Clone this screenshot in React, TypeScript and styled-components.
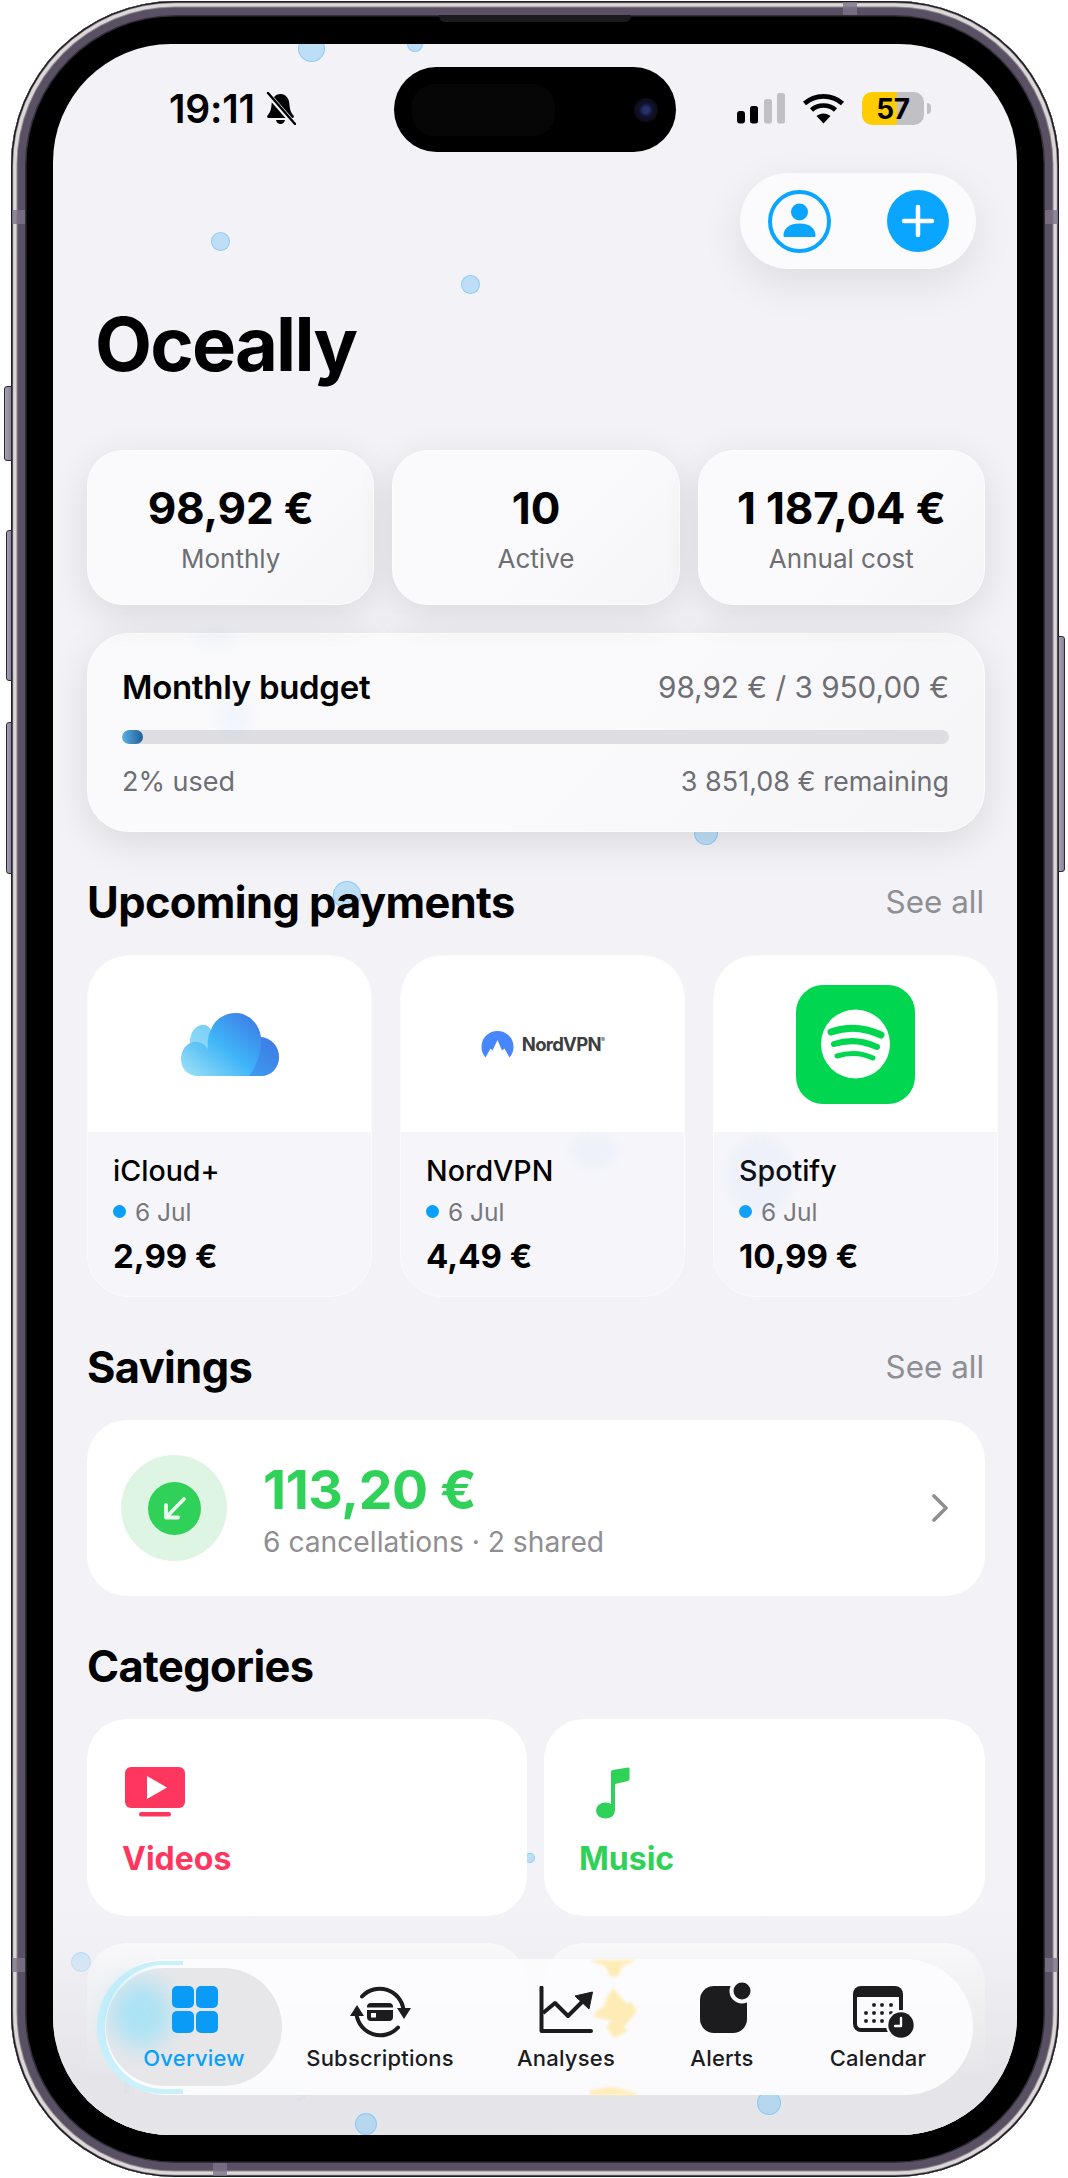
import React from "react";
import styled, { createGlobalStyle } from "styled-components";

const Global = createGlobalStyle`
  html, body { margin: 0; padding: 0; background: #fff; }
  body { font-family: Inter, "Liberation Sans", sans-serif; -webkit-font-smoothing: antialiased; }
  * { box-sizing: border-box; }
`;

const Page = styled.div`
  width: 1068px;
  height: 2178px;
  padding: 1px 9px 1px 11px;
  position: relative;
  overflow: hidden;
`;

const Shell = styled.div`
  position: relative;
  width: 1048px;
  height: 2176px;
  padding: 43px 42px 42px;
  border-radius: 164px;
  background: #000;
  box-shadow:
    inset 0 0 0 1.5px #1f1a24,
    inset 0 0 0 2.2px #8b8690,
    inset 0 0 0 5.5px #dcd8d6,
    inset 0 0 0 6.5px #8e8790,
    inset 0 0 0 14px #5a5064,
    inset 0 0 0 15.5px #332d38;
`;

const SideKey = styled.div<{ $side: "left" | "right"; $top: number; $height: number; $w: number }>`
  position: absolute;
  top: ${(p) => p.$top}px;
  height: ${(p) => p.$height}px;
  width: ${(p) => p.$w}px;
  ${(p) => (p.$side === "left" ? `left: ${-p.$w + 1}px; border-radius: 3px 0 0 3px;` : `right: ${-p.$w + 1}px; border-radius: 0 3px 3px 0;`)}
  background: linear-gradient(90deg, #a8a0b4, #8a8296);
  border: 1.5px solid #2c2732;
`;

const Notch = styled.div<{ $x?: number; $y?: number; $r?: number; $b?: number; $vertical?: boolean }>`
  position: absolute;
  background: #7d7388;
  ${(p) => (p.$x !== undefined ? `left: ${p.$x}px;` : "")}
  ${(p) => (p.$r !== undefined ? `right: ${p.$r}px;` : "")}
  ${(p) => (p.$y !== undefined ? `top: ${p.$y}px;` : "")}
  ${(p) => (p.$b !== undefined ? `bottom: ${p.$b}px;` : "")}
  width: ${(p) => (p.$vertical ? 13 : 14)}px;
  height: ${(p) => (p.$vertical ? 14 : 13)}px;
  opacity: 0.8;
`;

const Speaker = styled.div`
  position: absolute;
  top: 14px;
  left: 428px;
  width: 192px;
  height: 7px;
  border-radius: 0 0 6px 6px;
  background: #1b1b1f;
`;

const Screen = styled.div`
  position: relative;
  width: 964px;
  height: 2091px;
  border-radius: 118px;
  overflow: hidden;
  background: #f2f2f7;
`;

const Flow = styled.div`
  position: relative;
  z-index: 1;
  padding: 0 32px 0 34px;
`;

const Bubble = styled.span<{ $x: number; $y: number; $d: number; $front?: boolean }>`
  position: absolute;
  left: ${(p) => p.$x - p.$d / 2}px;
  top: ${(p) => p.$y - p.$d / 2}px;
  width: ${(p) => p.$d}px;
  height: ${(p) => p.$d}px;
  border-radius: 50%;
  background: rgba(120, 195, 245, 0.42);
  border: 1.5px solid rgba(110, 195, 250, 0.65);
  z-index: ${(p) => (p.$front ? 3 : 0)};
`;

const FaintSpot = styled.span<{ $x: number; $y: number; $w: number; $h: number }>`
  position: absolute;
  left: ${(p) => p.$x}px;
  top: ${(p) => p.$y}px;
  width: ${(p) => p.$w}px;
  height: ${(p) => p.$h}px;
  border-radius: 50%;
  background: rgba(170, 205, 250, 0.09);
  filter: blur(7px);
  z-index: 2;
`;

const Island = styled.div`
  position: absolute;
  z-index: 5;
  top: 23px;
  left: 341px;
  width: 282px;
  height: 85px;
  border-radius: 43px;
  background: #000;
  display: flex;
  align-items: center;
  justify-content: space-between;
  padding: 0 18px;
`;

const IslandSensor = styled.div`
  width: 143px;
  height: 52px;
  border-radius: 22px;
  background: #060606;
`;

const IslandLens = styled.div`
  width: 24px;
  height: 24px;
  border-radius: 50%;
  background: radial-gradient(circle, #26306a 0 18%, #10122c 40%, #0a0a14 75%);
`;

const StatusBar = styled.div`
  height: 129px;
  display: flex;
  align-items: center;
  justify-content: space-between;
  margin-right: 61px;
  margin-left: 82px;
`;

const StatusLeft = styled.div`
  display: flex;
  align-items: center;
  gap: 10px;
`;

const Clock = styled.span`
  font-size: 39px;
  font-weight: 600;
  letter-spacing: -0.2px;
  color: #000;
`;

const StatusRight = styled.div`
  display: flex;
  align-items: center;
  gap: 17px;
`;

const Battery = styled.div`
  position: relative;
  width: 62px;
  height: 33px;
  border-radius: 10px;
  background: linear-gradient(90deg, #ffcc00 0 57%, #c0c0c5 57% 100%);
  display: flex;
  align-items: center;
  justify-content: center;
  font-size: 28px;
  font-weight: 700;
  color: #000;
  letter-spacing: -0.4px;
  &::after {
    content: "";
    position: absolute;
    left: 65px;
    top: 11px;
    width: 4px;
    height: 11px;
    border-radius: 0 4px 4px 0;
    background: #c0c0c5;
  }
`;

const ActionRow = styled.div`
  display: flex;
  justify-content: flex-end;
  padding-right: 9px;
`;

const ActionPill = styled.div`
  width: 236px;
  height: 96px;
  border-radius: 48px;
  background: #fbfbfe;
  box-shadow: 0 14px 44px rgba(0, 0, 0, 0.09);
  display: flex;
  align-items: center;
  justify-content: space-between;
  padding: 0 27px 0 28px;
`;

const Title = styled.h1`
  margin: 35px 0 66px 8px;
  font-size: 74px;
  line-height: 80px;
  font-weight: 700;
  letter-spacing: -1.8px;
  color: #000;
`;

const StatGrid = styled.div`
  display: grid;
  grid-template-columns: repeat(3, 1fr);
  gap: 18px;
`;

const glass = `
  background: linear-gradient(135deg, #fafafc 55%, #f5f5f8 100%);
  border: 1.5px solid #fdfdfe;
  box-shadow: 0 10px 38px rgba(0, 0, 0, 0.105);
`;

const StatCard = styled.div`
  ${glass}
  height: 155px;
  border-radius: 36px;
  display: flex;
  flex-direction: column;
  align-items: center;
  padding-top: 32px;
`;

const StatValue = styled.div`
  font-size: 44px;
  line-height: 50px;
  font-weight: 700;
  letter-spacing: -0.2px;
  color: #000;
`;

const StatLabel = styled.div`
  margin-top: 11px;
  font-size: 26px;
  line-height: 30px;
  color: #6e6e73;
`;

const BudgetCard = styled.div`
  ${glass}
  margin-top: 28px;
  height: 199px;
  border-radius: 42px;
  padding: 33px 35px 0 34px;
`;

const BudgetRow = styled.div<{ $small?: boolean }>`
  display: flex;
  justify-content: space-between;
  align-items: center;
  height: 40px;
  color: #6e6e73;
  font-size: ${(p) => (p.$small ? 27 : 29.7)}px;
`;

const BudgetTitle = styled.span`
  font-size: 33px;
  font-weight: 600;
  letter-spacing: -0.3px;
  color: #000;
`;

const BudgetTrack = styled.div`
  margin: 23px 0 17px;
  height: 14px;
  border-radius: 7px;
  background: #dedee2;
  overflow: hidden;
`;

const BudgetFill = styled.div`
  height: 100%;
  border-radius: 7px;
  background: linear-gradient(90deg, #5cb0e4, #1f5f96);
`;

const SectionHead = styled.div`
  margin: 45px 0 28px;
  height: 50px;
  display: flex;
  align-items: center;
  justify-content: space-between;
`;

const SectionTitle = styled.h2`
  margin: 0;
  font-size: 43.4px;
  font-weight: 700;
  letter-spacing: -0.6px;
  color: #000;
`;

const SeeAll = styled.span`
  font-size: 31.4px;
  color: #8e8e93;
  padding-right: 1px;
`;

const UpcomingRow = styled.div`
  display: flex;
  gap: 28px;
  width: 911px;
`;

const UpcomingCard = styled.div`
  flex: 0 0 285px;
  height: 342px;
  border-radius: 42px;
  overflow: hidden;
  background: #f6f6fa;
  border: 1.5px solid #fbfbfd;
  display: flex;
  flex-direction: column;
`;

const LogoArea = styled.div`
  height: 176px;
  background: #fff;
  display: flex;
  align-items: center;
  justify-content: center;
`;

const NordLogo = styled.div`
  display: flex;
  align-items: center;
  gap: 8px;
`;

const NordWord = styled.span`
  font-size: 18.5px;
  font-weight: 700;
  letter-spacing: -0.7px;
  color: #3d3e42;
  sup { font-size: 6px; font-weight: 500; vertical-align: 9px; line-height: 0; }
`;

const UpcomingBody = styled.div`
  padding: 18px 25px 0;
`;

const UpcomingName = styled.div`
  font-size: 28.6px;
  line-height: 41px;
  font-weight: 500;
  color: #000;
`;

const UpcomingDate = styled.div`
  display: flex;
  align-items: center;
  gap: 9px;
  height: 41px;
  font-size: 24.5px;
  color: #77777c;
`;

const Dot = styled.span`
  width: 13px;
  height: 13px;
  border-radius: 50%;
  background: #0a9ff8;
`;

const UpcomingPrice = styled.div`
  margin-top: 2px;
  font-size: 33px;
  line-height: 44px;
  font-weight: 700;
  color: #000;
`;

const SavingsCard = styled.div`
  height: 176px;
  border-radius: 40px;
  background: #fff;
  display: flex;
  align-items: center;
  padding: 0 36px 0 34px;
`;

const SavingsHalo = styled.div`
  width: 106px;
  height: 106px;
  border-radius: 50%;
  background: #def5e4;
  display: flex;
  align-items: center;
  justify-content: center;
  flex: none;
`;

const SavingsText = styled.div`
  margin-left: 36px;
  padding-top: 4px;
  flex: 1;
`;

const SavingsAmount = styled.div`
  font-size: 53.5px;
  line-height: 60px;
  font-weight: 700;
  color: #30d158;
  letter-spacing: -0.4px;
`;

const SavingsSub = styled.div`
  margin-top: 4px;
  font-size: 28.2px;
  line-height: 36px;
  color: #8e8e93;
`;

const CategoryGrid = styled.div`
  display: grid;
  grid-template-columns: 440px 441px;
  gap: 27px 17px;
`;

const CategoryCard = styled.div`
  height: 197px;
  border-radius: 40px;
  background: #fff;
  padding: 47px 35px 0;
`;

const CategoryIcon = styled.div<{ $indent?: number }>`
  height: 58px;
  display: flex;
  align-items: flex-start;
  padding: 1px 0 0 ${(p) => p.$indent ?? 0}px;
`;

const CategoryName = styled.div<{ $color: string }>`
  margin-top: 15px;
  font-size: 32px;
  line-height: 40px;
  font-weight: 700;
  color: ${(p) => p.$color};
`;

const BottomFade = styled.div`
  position: absolute;
  z-index: 2;
  left: 0;
  right: 0;
  bottom: 0;
  height: 225px;
  background: linear-gradient(180deg, rgba(236, 236, 240, 0) 0%, rgba(236, 236, 240, 0.55) 25%, rgba(228, 228, 232, 0.96) 75%, rgba(229, 229, 233, 0.98) 100%);
`;

const TabBar = styled.nav`
  position: absolute;
  z-index: 4;
  left: 45px;
  top: 1915px;
  width: 875px;
  height: 136px;
  border-radius: 68px;
  background: rgba(252, 252, 254, 0.94);
  display: grid;
  grid-template-columns: 176px 196px 176px 136px 176px;
  align-items: stretch;
  padding: 9px 7px 9px 8px;
`;

const Tab = styled.div<{ $active?: boolean }>`
  position: relative;
  display: flex;
  flex-direction: column;
  align-items: center;
  padding-top: 18px;
  border-radius: 59px;
  background: ${(p) => (p.$active ? "#e7e7ea" : "transparent")};
`;

const TabIcon = styled.div<{ $nudgeX?: number; $raise?: number }>`
  position: relative;
  z-index: 1;
  height: 53px;
  display: flex;
  align-items: flex-start;
  justify-content: center;
  margin-left: ${(p) => p.$nudgeX ?? 0}px;
  top: ${(p) => -(p.$raise ?? 0)}px;
`;

const TabLabel = styled.span<{ $active?: boolean }>`
  position: relative;
  z-index: 1;
  margin-top: 4px;
  font-size: 22px;
  line-height: 30px;
  font-weight: 500;
  letter-spacing: 0.2px;
  color: ${(p) => (p.$active ? "#0a9ff8" : "#1c1c1e")};
`;

const GridGlyph = styled.div`
  display: grid;
  grid-template-columns: 22px 22px;
  grid-auto-rows: 22px;
  gap: 3px 2px;
  span { border-radius: 5px; background: #0a9bf6; }
`;

const LensArc = styled.div`
  position: absolute;
  left: -1px;
  top: 2px;
  width: 86px;
  height: 133px;
  border-radius: 66px 0 0 66px;
  border-style: solid;
  border-color: #c9f0fb;
  border-width: 4px 0 5px 8px;
`;

const LensGlow = styled.div`
  position: absolute;
  left: 4px;
  top: 12px;
  width: 62px;
  height: 68px;
  border-radius: 50%;
  background: #a5e2f6;
  filter: blur(11px);
  opacity: 0.9;
`;

const FishShape = styled.svg`
  position: absolute;
  left: 492px;
  top: 0;
  filter: blur(1.5px);
  opacity: 0.82;
`;

const Person = () => (
  <svg width="63" height="63" viewBox="0 0 63 63">
    <circle cx="31.5" cy="31.5" r="29.5" fill="none" stroke="#0aa5ff" strokeWidth="4" />
    <circle cx="31.5" cy="22" r="8.5" fill="#0aa5ff" />
    <path d="M15.5 45.5C15.5 38 22 33.5 31.5 33.5S47.5 38 47.5 45.5C47.5 46.5 47 47 46 47H17C16 47 15.5 46.5 15.5 45.5Z" fill="#0aa5ff" />
  </svg>
);

const PlusBadge = () => (
  <svg width="62" height="62" viewBox="0 0 62 62">
    <circle cx="31" cy="31" r="31" fill="#0aa5ff" />
    <path d="M17 31H45M31 17V45" stroke="#fff" strokeWidth="4.5" strokeLinecap="round" />
  </svg>
);

const BellSlash = () => (
  <svg width="31" height="33" viewBox="0 0 31 33">
    <path d="M15.5 2C10 2 7 6.5 6.6 12C6.2 18 5 20.5 2.5 23.5C1.7 24.6 2.3 26 3.7 26H27.3C28.7 26 29.3 24.6 28.5 23.5C26 20.5 24.8 18 24.4 12C24 6.5 21 2 15.5 2Z" fill="#000" />
    <path d="M11 28H20C19.5 30.5 17.7 32 15.5 32S11.5 30.5 11 28Z" fill="#000" />
    <path d="M2 1L29 32" stroke="#f2f2f7" strokeWidth="5" />
    <path d="M3 1L30 32" stroke="#000" strokeWidth="2.4" strokeLinecap="round" />
  </svg>
);

const Signal = () => (
  <svg width="48" height="31" viewBox="0 0 48 31">
    <rect x="0" y="18" width="8" height="12.5" rx="3" fill="#000" />
    <rect x="13" y="13" width="8" height="17.5" rx="2.5" fill="#000" />
    <rect x="27" y="6" width="8" height="24.5" rx="2.5" fill="#c0c0c5" />
    <rect x="40" y="0" width="8" height="30.5" rx="2.5" fill="#c0c0c5" />
  </svg>
);

const Wifi = () => (
  <svg width="43" height="31" viewBox="0 0 43 31">
    <path d="M2.5 10.5C13 1 30 1 40.5 10.5" fill="none" stroke="#000" strokeWidth="4.6" />
    <path d="M9.5 17C16 11 27 11 33.5 17" fill="none" stroke="#000" strokeWidth="4.6" />
    <path d="M14.5 23C18.5 19.5 24.5 19.5 28.5 23L21.5 30.5Z" fill="#000" />
  </svg>
);

const ICloud = () => (
  <svg width="98" height="63" viewBox="0 0 98 63">
    <defs>
      <linearGradient id="cloudFill" x1="0" y1="1" x2="1" y2="0.25">
        <stop offset="0" stopColor="#a3e3f5" />
        <stop offset="0.5" stopColor="#3fb5f8" />
        <stop offset="1" stopColor="#3d74e4" />
      </linearGradient>
    </defs>
    <path d="M17 63C6 63 0 55 0 46C0 39 3.500 33 9 30C9 20 14 12 22 12C26 12 28.500 14 30 17C33 7 43 0 55 0C67 0 78 10 80 24C91 25 98 34 98 44C98 55 90 63 80 63Z" fill="url(#cloudFill)" />
    <path d="M30 17C27 22 26 30 27 36C22 29 15 27 9 30C9 20 14 12 22 12C26 12 28.500 14 30 17Z" fill="#bdeef8" opacity="0.5" />
    <path d="M80 24C81 34 78 50 68 63H80C90 63 98 55 98 44C98 34 91 25 80 24Z" fill="#3d6fe0" opacity="0.4" />
  </svg>
);

const NordMark = () => (
  <svg width="33" height="28" viewBox="0 0 33 28">
    <path d="M4.500 27.500A16 16 0 1 1 28.500 27.500L23.500 18.500L21 20.500L16.500 10L11.500 20.500L9.500 18.500Z" fill="#4687ff" />
  </svg>
);

const SpotifyTile = () => (
  <svg width="119" height="119" viewBox="0 0 119 119">
    <rect width="119" height="119" rx="27" fill="#00d64f" />
    <circle cx="59.500" cy="59" r="34.500" fill="#fff" />
    <g fill="none" stroke="#00d64f" strokeLinecap="round">
      <path d="M35 47Q60 38 85 50" strokeWidth="7" />
      <path d="M38 59Q60 52 81 62" strokeWidth="6" />
      <path d="M41 71Q60 65 77 73" strokeWidth="5" />
    </g>
  </svg>
);

const DownLeft = () => (
  <svg width="53" height="53" viewBox="0 0 53 53">
    <circle cx="26.500" cy="26.500" r="26.500" fill="#30d158" />
    <path d="M36 17L19 34.500M18 23V35.500H30" fill="none" stroke="#e9fbee" strokeWidth="3.800" strokeLinecap="round" strokeLinejoin="round" />
  </svg>
);

const Chevron = () => (
  <svg width="18" height="28" viewBox="0 0 18 28">
    <path d="M3 2L15 14L3 26" fill="none" stroke="#8e8e93" strokeWidth="3.600" strokeLinecap="round" strokeLinejoin="round" />
  </svg>
);

const Tv = () => (
  <svg width="60" height="50" viewBox="0 0 60 50">
    <rect width="60" height="41" rx="6" fill="#ff375f" />
    <path d="M22 9L42 20.500L22 32Z" fill="#fff" />
    <rect x="14" y="45" width="32" height="4.500" rx="2.200" fill="#ff375f" />
  </svg>
);

const Note = () => (
  <svg width="34" height="52" viewBox="0 0 34 52">
    <ellipse cx="9.500" cy="43.500" rx="9.500" ry="8" fill="#30d158" />
    <rect x="15" y="5" width="4" height="39" fill="#30d158" />
    <path d="M15 5C15 4 15.500 3.500 16.500 3L32 0.500C33 0.500 33.500 1 33.500 2V12C33.500 13 33 13.500 32 14L15 18Z" fill="#30d158" />
  </svg>
);

const SubscriptionGlyph = () => (
  <svg width="61" height="52" viewBox="0 0 61 52">
    <g fill="none" stroke="#1c1c1e" strokeWidth="4" strokeLinecap="round">
      <path d="M12 10.500A24 24 0 0 1 53.500 24" />
      <path d="M48 41.500A24 24 0 0 1 6.500 28" />
    </g>
    <path d="M47 22H61L54 33Z" fill="#1c1c1e" />
    <path d="M0 30H14L7 19Z" fill="#1c1c1e" />
    <rect x="17" y="17" width="26" height="18" rx="4" fill="#1c1c1e" />
    <rect x="17" y="21.500" width="26" height="2.500" fill="#fbfbfd" />
    <rect x="21" y="27" width="5" height="4.500" fill="#fbfbfd" />
  </svg>
);

const ChartGlyph = () => (
  <svg width="54" height="47" viewBox="0 0 54 47">
    <path d="M2.500 1.500V45H52" fill="none" stroke="#1c1c1e" strokeWidth="4" strokeLinecap="round" strokeLinejoin="round" />
    <path d="M4 27L16 17L29 30L43 16" fill="none" stroke="#1c1c1e" strokeWidth="4" strokeLinejoin="round" />
    <path d="M36 10L53.500 6L50 23Z" fill="#1c1c1e" stroke="#1c1c1e" strokeWidth="1" strokeLinejoin="round" />
  </svg>
);

const AlertGlyph = () => (
  <svg width="58" height="54" viewBox="0 0 58 54">
    <rect x="0" y="5" width="47" height="47" rx="14" fill="#1c1c1e" />
    <circle cx="42" cy="10" r="12.500" fill="#fbfbfd" />
    <circle cx="42" cy="10" r="8.500" fill="#1c1c1e" />
  </svg>
);

const CalendarGlyph = () => {
  const dots: [number, number][] = [
    [21, 19], [29, 19], [38, 19],
    [13, 27], [21, 27], [29, 27], [38, 27],
    [13, 35], [21, 35], [29, 35],
  ];
  return (
    <svg width="64" height="54" viewBox="0 0 64 54">
      <rect width="50" height="46" rx="8" fill="#1c1c1e" />
      <path d="M4 11H46V38C46 40 44.500 42 42 42H8C5.500 42 4 40 4 38Z" fill="#fbfbfd" />
      {dots.map(([x, y]) => (
        <rect key={`${x}-${y}`} x={x - 1.750} y={y - 1.750} width="3.500" height="3.500" rx="1" fill="#1c1c1e" />
      ))}
      <circle cx="48" cy="39" r="15" fill="#fbfbfd" />
      <circle cx="48" cy="39" r="12.700" fill="#1c1c1e" />
      <path d="M48 32V40H42" fill="none" stroke="#fbfbfd" strokeWidth="2.400" strokeLinecap="round" strokeLinejoin="round" />
    </svg>
  );
};

const bubbles = [
  { x: 258, y: 4, d: 27 },
  { x: 362, y: 0, d: 16 },
  { x: 167, y: 197, d: 19 },
  { x: 417, y: 240, d: 19 },
  { x: 653, y: 789, d: 24 },
  { x: 294, y: 851, d: 28 },
  { x: 477, y: 1814, d: 10 },
  { x: 28, y: 1918, d: 20 },
  { x: 313, y: 2080, d: 22, front: true },
  { x: 716, y: 2059, d: 24, front: true },
];

const spots = [
  { x: 140, y: 588, w: 44, h: 14 },
  { x: 164, y: 650, w: 34, h: 44 },
  { x: 516, y: 1090, w: 50, h: 34 },
  { x: 672, y: 1092, w: 70, h: 80 },
];

const upcoming = [
  { name: "iCloud+", price: "2,99 €", logo: <ICloud /> },
  {
    name: "NordVPN",
    price: "4,49 €",
    logo: (
      <NordLogo>
        <NordMark />
        <NordWord>
          NordVPN<sup>®</sup>
        </NordWord>
      </NordLogo>
    ),
  },
  { name: "Spotify", price: "10,99 €", logo: <SpotifyTile /> },
];

export default function App() {
  return (
    <Page>
      <Global />
      <Shell>
        <SideKey $side="left" $top={385} $height={75} $w={8} />
        <SideKey $side="left" $top={529} $height={151} $w={6} />
        <SideKey $side="left" $top={721} $height={152} $w={6} />
        <SideKey $side="right" $top={635} $height={236} $w={7} />
        <Notch $x={832} $y={1} />
        <Notch $x={202} $b={1} />
        <Notch $x={1} $y={209} $vertical />
        <Notch $r={1} $y={209} $vertical />
        <Notch $x={1} $y={1957} $vertical />
        <Notch $r={1} $y={1957} $vertical />
        <Speaker />
        <Screen>
          {bubbles.map((b) => (
            <Bubble key={`${b.x}-${b.y}`} $x={b.x} $y={b.y} $d={b.d} $front={b.front} />
          ))}
          {spots.map((s) => (
            <FaintSpot key={`${s.x}-${s.y}`} $x={s.x} $y={s.y} $w={s.w} $h={s.h} />
          ))}
          <Island>
            <IslandSensor />
            <IslandLens />
          </Island>
          <Flow>
            <StatusBar>
              <StatusLeft>
                <Clock>19:11</Clock>
                <BellSlash />
              </StatusLeft>
              <StatusRight>
                <Signal />
                <Wifi />
                <Battery>57</Battery>
              </StatusRight>
            </StatusBar>
            <ActionRow>
              <ActionPill>
                <Person />
                <PlusBadge />
              </ActionPill>
            </ActionRow>
            <Title>Oceally</Title>
            <StatGrid>
              <StatCard>
                <StatValue>98,92 €</StatValue>
                <StatLabel>Monthly</StatLabel>
              </StatCard>
              <StatCard>
                <StatValue>10</StatValue>
                <StatLabel>Active</StatLabel>
              </StatCard>
              <StatCard>
                <StatValue>1 187,04 €</StatValue>
                <StatLabel>Annual cost</StatLabel>
              </StatCard>
            </StatGrid>
            <BudgetCard>
              <BudgetRow>
                <BudgetTitle>Monthly budget</BudgetTitle>
                <span>98,92 € / 3 950,00 €</span>
              </BudgetRow>
              <BudgetTrack>
                <BudgetFill style={{ width: `${(98.92 / 3950) * 100}%` }} />
              </BudgetTrack>
              <BudgetRow $small>
                <span>2% used</span>
                <span>3 851,08 € remaining</span>
              </BudgetRow>
            </BudgetCard>
            <SectionHead>
              <SectionTitle>Upcoming payments</SectionTitle>
              <SeeAll>See all</SeeAll>
            </SectionHead>
            <UpcomingRow>
              {upcoming.map((u) => (
                <UpcomingCard key={u.name}>
                  <LogoArea>{u.logo}</LogoArea>
                  <UpcomingBody>
                    <UpcomingName>{u.name}</UpcomingName>
                    <UpcomingDate>
                      <Dot />6 Jul
                    </UpcomingDate>
                    <UpcomingPrice>{u.price}</UpcomingPrice>
                  </UpcomingBody>
                </UpcomingCard>
              ))}
            </UpcomingRow>
            <SectionHead>
              <SectionTitle>Savings</SectionTitle>
              <SeeAll>See all</SeeAll>
            </SectionHead>
            <SavingsCard>
              <SavingsHalo>
                <DownLeft />
              </SavingsHalo>
              <SavingsText>
                <SavingsAmount>113,20 €</SavingsAmount>
                <SavingsSub>6 cancellations · 2 shared</SavingsSub>
              </SavingsText>
              <Chevron />
            </SavingsCard>
            <SectionHead>
              <SectionTitle>Categories</SectionTitle>
            </SectionHead>
            <CategoryGrid>
              <CategoryCard>
                <CategoryIcon $indent={3}>
                  <Tv />
                </CategoryIcon>
                <CategoryName $color="#ff375f">Videos</CategoryName>
              </CategoryCard>
              <CategoryCard>
                <CategoryIcon $indent={17}>
                  <Note />
                </CategoryIcon>
                <CategoryName $color="#30d158">Music</CategoryName>
              </CategoryCard>
              <CategoryCard>
                <CategoryIcon />
                <CategoryName $color="#4f97ee">Productivity</CategoryName>
              </CategoryCard>
              <CategoryCard />
            </CategoryGrid>
          </Flow>
          <BottomFade />
          <TabBar>
            <FishShape width="60" height="136" viewBox="0 0 60 136">
              <g fill="#ffe9a8">
                <path d="M-2 1H47L33 7L27 18L21 18L15 7Z" />
                <path d="M23 29L36 44L41 43L47 52L34 68L30 64L38 72L24 79L16 68L22 62L4 58L6 52L14 48L16 40Z" />
                <path d="M0 131L22 128L47 134V136H0Z" />
              </g>
            </FishShape>
            <LensArc />
            <Tab $active>
              <LensGlow />
              <TabIcon $nudgeX={1}>
                <GridGlyph>
                  <span />
                  <span />
                  <span />
                  <span />
                </GridGlyph>
              </TabIcon>
              <TabLabel $active>Overview</TabLabel>
            </Tab>
            <Tab>
              <TabIcon>
                <SubscriptionGlyph />
              </TabIcon>
              <TabLabel>Subscriptions</TabLabel>
            </Tab>
            <Tab>
              <TabIcon>
                <ChartGlyph />
              </TabIcon>
              <TabLabel>Analyses</TabLabel>
            </Tab>
            <Tab>
              <TabIcon $nudgeX={14} $raise={5}>
                <AlertGlyph />
              </TabIcon>
              <TabLabel>Alerts</TabLabel>
            </Tab>
            <Tab>
              <TabIcon $nudgeX={13}>
                <CalendarGlyph />
              </TabIcon>
              <TabLabel>Calendar</TabLabel>
            </Tab>
          </TabBar>
        </Screen>
      </Shell>
    </Page>
  );
}
